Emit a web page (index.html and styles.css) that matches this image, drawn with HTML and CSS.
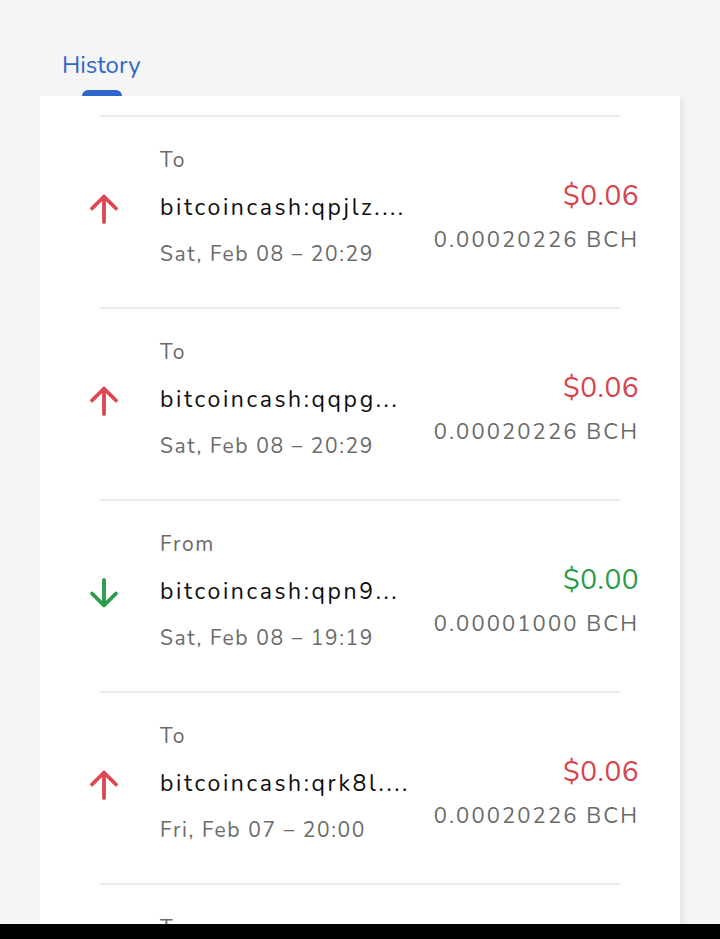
FILE: index.html
```html
<!DOCTYPE html>
<html>
<head>
<meta charset="utf-8">
<link rel="stylesheet" href="styles.css">
</head>
<body>
<div class="tabs">
  <div class="tab">
    <span class="tab-label">History</span>
    <span class="tab-indicator"></span>
  </div>
</div>
<div class="card">
  <div class="tx">
    <div class="sep"></div>
    <div class="tx-body">
      <div class="icon"><svg viewBox="0 0 32 32" width="32" height="32"><path d="M16 29V4M4 15.5L16 3.5 28 15.5" class="arrow sent"/></svg></div>
      <div class="info">
        <div class="dir">To</div>
        <div class="addr">bitcoincash:qpjlz....</div>
        <div class="date">Sat, Feb 08 – 20:29</div>
      </div>
      <div class="amounts">
        <div class="fiat sent-text">$0.06</div>
        <div class="crypto">0.00020226 BCH</div>
      </div>
    </div>
  </div>
  <div class="tx">
    <div class="sep"></div>
    <div class="tx-body">
      <div class="icon"><svg viewBox="0 0 32 32" width="32" height="32"><path d="M16 29V4M4 15.5L16 3.5 28 15.5" class="arrow sent"/></svg></div>
      <div class="info">
        <div class="dir">To</div>
        <div class="addr">bitcoincash:qqpg...</div>
        <div class="date">Sat, Feb 08 – 20:29</div>
      </div>
      <div class="amounts">
        <div class="fiat sent-text">$0.06</div>
        <div class="crypto">0.00020226 BCH</div>
      </div>
    </div>
  </div>
  <div class="tx">
    <div class="sep"></div>
    <div class="tx-body">
      <div class="icon"><svg viewBox="0 0 32 32" width="32" height="32"><path d="M16 3V28M4 16.5L16 28.5 28 16.5" class="arrow recv"/></svg></div>
      <div class="info">
        <div class="dir">From</div>
        <div class="addr">bitcoincash:qpn9...</div>
        <div class="date">Sat, Feb 08 – 19:19</div>
      </div>
      <div class="amounts">
        <div class="fiat recv-text">$0.00</div>
        <div class="crypto">0.00001000 BCH</div>
      </div>
    </div>
  </div>
  <div class="tx">
    <div class="sep"></div>
    <div class="tx-body">
      <div class="icon"><svg viewBox="0 0 32 32" width="32" height="32"><path d="M16 29V4M4 15.5L16 3.5 28 15.5" class="arrow sent"/></svg></div>
      <div class="info">
        <div class="dir">To</div>
        <div class="addr">bitcoincash:qrk8l....</div>
        <div class="date">Fri, Feb 07 – 20:00</div>
      </div>
      <div class="amounts">
        <div class="fiat sent-text">$0.06</div>
        <div class="crypto">0.00020226 BCH</div>
      </div>
    </div>
  </div>
  <div class="tx">
    <div class="sep"></div>
    <div class="tx-body">
      <div class="icon"></div>
      <div class="info">
        <div class="dir">To</div>
      </div>
    </div>
  </div>
</div>
<div class="navbar"></div>
</body>
</html>
```
FILE: styles.css
```css
html, body {
  margin: 0;
  padding: 0;
  background: #f5f5f5;
  font-family: "Nunito", "Lato", "Open Sans", sans-serif;
  height: 939px;
  overflow: hidden;
}
.tabs {
  display: flex;
  padding: 0 0 0 62px;
  height: 96px;
  align-items: flex-end;
}
.tab {
  display: flex;
  flex-direction: column;
  align-items: center;
  gap: 10px;
}
.tab-label {
  color: #2f66c9;
  font-size: 24px;
  line-height: 30px;
}
.tab-indicator {
  width: 40px;
  height: 6px;
  background: #2f66c9;
  border-radius: 6px 6px 0 0;
  margin-left: 2px;
}
.card {
  margin: 0 40px;
  background: #fff;
  box-shadow: 6px 0 6px -2px rgba(0,0,0,0.06);
  padding-top: 19px;
}
.sep {
  height: 2px;
  margin: 0 60px;
  background: #ececec;
}
.tx-body {
  display: flex;
  align-items: flex-start;
  padding: 20px 41px 29px 48px;
  height: 141px;
}
.icon {
  width: 32px;
  height: 32px;
  margin-top: 56px;
  flex: none;
}
.icon svg { display: block; }
.arrow {
  fill: none;
  stroke-width: 3.8;
  stroke-linecap: round;
  stroke-linejoin: round;
}
.arrow.sent { stroke: #db4650; }
.arrow.recv { stroke: #2a9c4a; }
.info {
  margin-left: 40px;
  flex: 1;
  min-width: 0;
}
.dir, .date {
  font-size: 21px;
  line-height: 47px;
  color: #6a6a6a;
  letter-spacing: 1.6px;
}
.addr {
  font-size: 23px;
  line-height: 47px;
  color: #0d0d0d;
  letter-spacing: 2.6px;
}
.amounts {
  margin-top: 37px;
  text-align: right;
}
.fiat {
  font-size: 28px;
  line-height: 44px;
  letter-spacing: 0.5px;
}
.sent-text { color: #d9424c; }
.recv-text { color: #2a9c4a; }
.crypto {
  font-size: 22px;
  line-height: 44px;
  color: #6a6a6a;
  letter-spacing: 2.1px;
}
.navbar {
  position: fixed;
  left: 0;
  right: 0;
  bottom: 0;
  height: 15px;
  background: #000;
}
```
